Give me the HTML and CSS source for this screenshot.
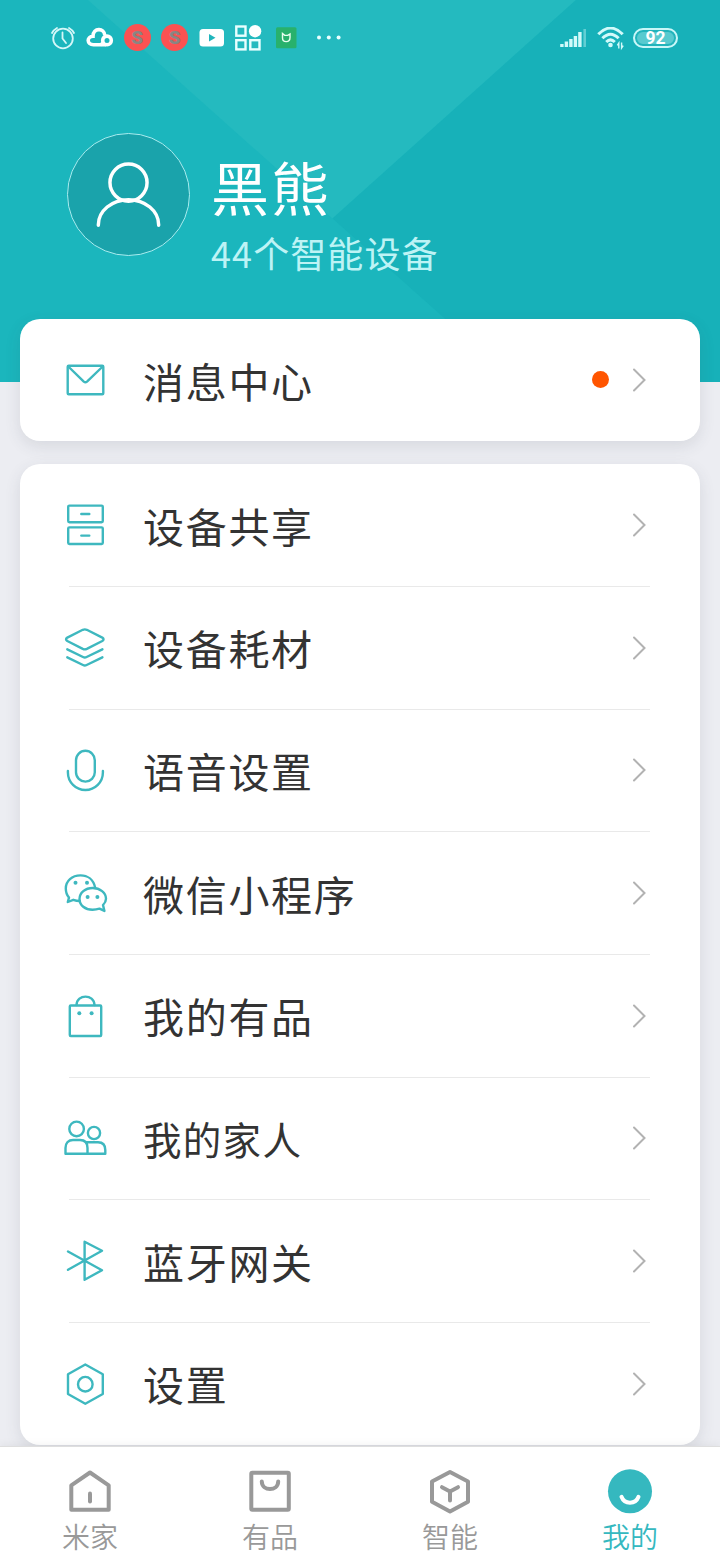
FILE: index.html
```html
<!DOCTYPE html>
<html lang="zh-CN">
<head>
<meta charset="utf-8">
<title>我的</title>
<link rel="stylesheet" href="styles.css">
</head>
<body>
<div class="app">
  <header class="header">
    <svg class="facets" viewBox="0 0 720 382" aria-hidden="true">
      <path d="M88 0H576L332.500 218.500Z" fill="#24babf"/>
      <path d="M576 0H720V382H516L332.500 218.500Z" fill="#17b1b9"/>
    </svg>
    <div class="status">
      <div class="status-left">
        <svg class="sicon" viewBox="0 0 36 36" fill="none" stroke="#d5f7f8" stroke-width="1.800" stroke-linecap="round"><circle cx="18" cy="18.500" r="9.800"/><path d="M17.500 12.500V18.500L21 23M7 13Q8.500 10 12 8M29 13Q27.500 10 24 8"/></svg>
        <svg class="sicon" viewBox="0 0 36 36" fill="none" stroke="#fff" stroke-width="3.600"><path d="M24 24.700H11.500C4.500 24.700 4.500 16.500 11 16.200C11 7.500 22.500 7.500 22.800 15.500"/><circle cx="25" cy="20.400" r="4.300"/><path d="M18.500 25L22 22"/></svg>
        <span class="sicon badge"><b>S</b></span>
        <span class="sicon badge"><b>S</b></span>
        <svg class="sicon" viewBox="0 0 36 36"><rect x="5.500" y="9" width="24.500" height="17.500" rx="3.500" fill="#fff"/><path d="M15 14V21.500L21.500 17.700Z" fill="#20b5bc"/></svg>
        <svg class="sicon" viewBox="0 0 36 36" fill="none" stroke="#e9ffff" stroke-width="2.400"><rect x="5.300" y="6.500" width="9.200" height="9.200"/><rect x="5.300" y="20.200" width="9.200" height="9.200"/><rect x="19.300" y="20.200" width="9.200" height="9.200"/><circle cx="24.100" cy="11.200" r="6.200" fill="#fff" stroke="none"/></svg>
        <svg class="sicon" viewBox="0 0 36 36"><rect x="7" y="7.300" width="20.500" height="21" rx="1.500" fill="#28b16c"/><path d="M13.500 13.500V18Q13.500 21.600 17.200 21.600Q21 21.600 21 17.500V14L18.800 15.400H15.700Z" fill="none" stroke="#e8fff0" stroke-width="1.400"/></svg>
        <svg class="more" viewBox="0 0 36 36" fill="#e9ffff"><circle cx="7" cy="17.500" r="2"/><circle cx="16.800" cy="17.500" r="2"/><circle cx="26.600" cy="17.500" r="2"/></svg>
      </div>
      <div class="status-right">
        <svg class="signal" viewBox="0 0 27 20" stroke="#d2fafa" stroke-width="3.400"><path d="M1.900 16V19M6.400 13.500V19M10.900 11V19M15.400 8V19M19.900 4V19"/><path d="M24.700 1V19" stroke-width="2.600" opacity=".4"/></svg>
        <svg class="wifi" viewBox="0 0 28 24" fill="none" stroke="#d2fafa" stroke-width="3"><path d="M1.300 7.300Q13.500-5.200 25.700 7.300M5.400 11.300Q13.500 3 21.600 11.300M9.200 15Q13.500 10.800 17.800 15"/><circle cx="13.500" cy="18" r="2.300" fill="#d2fafa" stroke="none"/><path d="M21.800 21.500V16L20.300 18.300M24.600 15.500V21L26.200 18.700" stroke-width="1.400"/></svg>
        <span class="battery">92</span>
      </div>
    </div>
    <div class="profile">
      <div class="avatar">
        <svg viewBox="0 0 122 122" fill="none" stroke="#fff" stroke-width="3.500" stroke-linecap="round"><circle cx="61" cy="49" r="18.700"/><path d="M30.600 92V91.500A30.400 25.300 0 0 1 91.400 91.500V92"/></svg>
      </div>
      <div class="who">
        <div class="name">黑熊</div>
        <div class="count">44个智能设备</div>
      </div>
    </div>
  </header>

  <main class="content">
    <section class="card">
      <div class="row">
        <svg class="icon" viewBox="0 0 50 50"><rect x="7.700" y="10.800" width="35.600" height="28.500" rx="1"/><path d="M8.300 11.500L23.800 26.600Q25.400 28 27 26.600L42.700 11.500"/></svg>
        <span class="label">消息中心</span><i class="dot"></i>
        <svg class="chev" viewBox="0 0 16 26"><path d="M3 2.500L13.500 13L3 23.500"/></svg>
      </div>
    </section>
    <section class="card list">
      <div class="row">
        <svg class="icon" viewBox="0 0 50 50"><rect x="8.200" y="5.600" width="34.600" height="16.600" rx="1.200"/><rect x="8.200" y="27.400" width="34.600" height="16.600" rx="1.200"/><path d="M21.300 14H29.300M21.300 35.600H29.300"/></svg>
        <span class="label">设备共享</span>
        <svg class="chev" viewBox="0 0 16 26"><path d="M3 2.500L13.500 13L3 23.500"/></svg>
      </div>
      <div class="row">
        <svg class="icon" viewBox="0 0 50 50"><path d="M22.800 6.800Q24.800 6 26.800 6.800L42.300 14.600Q44.800 16.300 42.300 18L26.800 25.900Q24.800 26.800 22.800 25.900L7.300 18Q4.800 16.300 7.300 14.600Z"/><path d="M7.300 26.300L23 34Q24.800 34.900 26.600 34L42.400 26.300M7.300 34.300L23 42Q24.800 42.900 26.600 42L42.400 34.300"/></svg>
        <span class="label">设备耗材</span>
        <svg class="chev" viewBox="0 0 16 26"><path d="M3 2.500L13.500 13L3 23.500"/></svg>
      </div>
      <div class="row">
        <svg class="icon" viewBox="0 0 50 50"><rect x="16" y="5.800" width="18.800" height="30.800" rx="9.400"/><path d="M7.900 26V27.500a17.500 17.500 0 0 0 35 0V26"/></svg>
        <span class="label">语音设置</span>
        <svg class="chev" viewBox="0 0 16 26"><path d="M3 2.500L13.500 13L3 23.500"/></svg>
      </div>
      <div class="row">
        <svg class="icon" viewBox="0 0 50 50"><path d="M35.200 19.800C33.500 11.500 27.500 7.400 20.500 7.400C12 7.400 5.800 13 5.800 20.500C5.800 24.700 7.100 27.500 9 29.600L7.800 34L13.300 31.800Q16.500 33 19.700 33"/><path d="M43 37C44.800 35.200 46 33 46 30.700C46 24.700 40 20 32.700 20C25.200 20 19.500 24.800 19.500 31C19.500 37.300 25.200 41.800 32.500 41.800Q36.200 41.800 39.500 40.700L44.400 42.900Z"/><g class="solid"><circle cx="15.500" cy="14.800" r="2"/><circle cx="27" cy="14.800" r="2"/><circle cx="27.600" cy="29" r="2"/><circle cx="37.400" cy="29" r="2"/></g></svg>
        <span class="label">微信小程序</span>
        <svg class="chev" viewBox="0 0 16 26"><path d="M3 2.500L13.500 13L3 23.500"/></svg>
      </div>
      <div class="row">
        <svg class="icon" viewBox="0 0 50 50"><rect x="9.800" y="14.500" width="31.400" height="30.500" rx="1"/><path d="M16.500 14C17 2.800 34 2.800 34.500 14"/><g class="solid"><circle cx="19.300" cy="22.200" r="2"/><circle cx="31.600" cy="22.200" r="2"/></g></svg>
        <span class="label">我的有品</span>
        <svg class="chev" viewBox="0 0 16 26"><path d="M3 2.500L13.500 13L3 23.500"/></svg>
      </div>
      <div class="row">
        <svg class="icon" viewBox="0 0 50 50"><circle cx="16.600" cy="15.900" r="7.300"/><circle cx="34" cy="20" r="6.100"/><path d="M27.500 40.800H5.500V35C5.500 30 8.500 27 13 27H20C25 27 27.500 30 27.500 35V40.800H45.300V37C45.300 31.500 42.500 29.200 38 29.200H26"/></svg>
        <span class="label small">我的家人</span>
        <svg class="chev" viewBox="0 0 16 26"><path d="M3 2.500L13.500 13L3 23.500"/></svg>
      </div>
      <div class="row">
        <svg class="icon" viewBox="0 0 50 50"><path d="M8 15.500L42 34.200L24.600 43.800V5.800L42 14.800L8 33.800"/></svg>
        <span class="label">蓝牙网关</span>
        <svg class="chev" viewBox="0 0 16 26"><path d="M3 2.500L13.500 13L3 23.500"/></svg>
      </div>
      <div class="row">
        <svg class="icon" viewBox="0 0 50 50"><path d="M25.300 5.500L42.800 15.200V35L25.300 44.700L8 35V15.200Z"/><circle cx="25.300" cy="25.200" r="7.300"/></svg>
        <span class="label">设置</span>
        <svg class="chev" viewBox="0 0 16 26"><path d="M3 2.500L13.500 13L3 23.500"/></svg>
      </div>
    </section>
  </main>

  <nav class="tabs">
    <div class="tab"><svg viewBox="0 0 48 48"><path d="M5.300 18.300L24 5.500L42.700 18.300V42.800H5.300Z"/><path d="M24 26.500V34.500"/></svg><span>米家</span></div>
    <div class="tab"><svg viewBox="0 0 48 48"><rect x="5.300" y="5.800" width="37.500" height="37" rx="1"/><path d="M15.800 14.500C16 24.500 32 24.500 32.200 14.500"/></svg><span>有品</span></div>
    <div class="tab"><svg viewBox="0 0 48 48"><path d="M24 4.900L42 14.500V34.800L24 44.600L6 34.800V14.500Z"/><path d="M16 20.200L24 24.400L32 20.200M24 24.400V33.500"/></svg><span>智能</span></div>
    <div class="tab active"><svg viewBox="0 0 48 48"><circle class="face" cx="24" cy="24.300" r="22"/><path class="smile" d="M15.500 29.800C18.500 37.700 29.500 37.700 32.500 29.800"/></svg><span>我的</span></div>
  </nav>
</div>
</body>
</html>
```
FILE: styles.css
```css
* { box-sizing: border-box; }
body {
  margin: 0;
  font-family: "Noto Sans CJK SC", sans-serif;
  background: #ecedf2;
}
svg { display: block; flex: none; }
.app {
  width: 720px;
  height: 1560px;
  overflow: hidden;
  display: flex;
  flex-direction: column;
}

/* Header */
.header {
  position: relative;
  height: 382px;
  flex: none;
  background: #1bb6bd;
}
.facets { position: absolute; inset: 0; width: 720px; height: 382px; }
.status {
  position: relative;
  height: 75px;
  padding: 0 42px 0 44.5px;
  display: flex;
  align-items: center;
  justify-content: space-between;
}
.status-left, .status-right { display: flex; align-items: center; }
.status-left { gap: 1.4px; }
.sicon { width: 36px; height: 36px; }
.more { width: 36px; height: 36px; margin-left: 6px; }
.badge { display: flex; align-items: center; justify-content: center; }
.badge b {
  width: 27px;
  height: 27px;
  border-radius: 50%;
  background: #fb5252;
  color: #8a8583;
  font: 900 19px/27px Roboto, sans-serif;
  text-align: center;
}
.signal { width: 27px; height: 20px; margin-right: 10px; }
.wifi { width: 28px; height: 24px; margin: 2px 8px 0 0; }
.battery {
  width: 45px;
  height: 20px;
  border: 2px solid #c9f7f8;
  border-radius: 10px;
  background: #58cacf;
  box-shadow: inset 0 0 0 2px #22b4bb;
  color: #fff;
  font: 700 17.5px/16.5px Roboto, sans-serif;
  text-align: center;
}
.profile {
  position: relative;
  display: flex;
  padding: 57.5px 0 0 67px;
}
.avatar {
  width: 123px;
  height: 123px;
  border-radius: 50%;
  border: 1.5px solid #a9ecef;
  background: #1aa3ab;
}
.avatar svg { width: 121px; height: 121px; }
.who { margin-left: 21px; padding-top: 17.5px; color: #fff; }
.name { font-size: 58px; line-height: 72px; letter-spacing: 2px; }
.count { margin-top: 2px; font-size: 36px; line-height: 56px; letter-spacing: 1.1px; color: #bdf3f5; }

/* Cards */
.content {
  position: relative;
  margin-top: -63px;
  padding: 0 20px;
  flex: 1;
  display: flex;
  flex-direction: column;
  gap: 22.5px;
}
.card {
  width: 679.5px;
  border-radius: 20px;
  background: #fff;
  box-shadow: 0 5px 16px rgba(60, 65, 80, .12);
}
.row {
  position: relative;
  height: 122.67px;
  display: flex;
  align-items: center;
  padding: 0 52.3px 0 40px;
}
.card:first-child .row { height: 122.3px; }
.list .row:not(:last-child)::after {
  content: "";
  position: absolute;
  left: 49px;
  right: 49.5px;
  bottom: -0.6px;
  height: 1px;
  background: #e9e9e9;
}
.icon {
  width: 50px;
  height: 50px;
  fill: none;
  stroke: #3eb8bf;
  stroke-width: 2.4;
  stroke-linejoin: round;
  stroke-linecap: round;
}
.icon .solid { fill: #3eb8bf; stroke: none; }
.label {
  margin: -1px 0 0 33px;
  flex: 1;
  font-size: 41px;
  line-height: 60px;
  letter-spacing: 1.7px;
  color: #333;
}
.label.small { font-size: 38.5px; letter-spacing: 1.3px; }
.dot {
  width: 17px;
  height: 17px;
  margin: -1px 22.5px 0 0;
  border-radius: 50%;
  background: #ff5500;
}
.chev {
  width: 16px;
  height: 26px;
  fill: none;
  stroke: #b2b2b2;
  stroke-width: 2;
  stroke-linecap: round;
}

/* Bottom navigation */
.tabs {
  position: relative;
  height: 114px;
  flex: none;
  display: flex;
  border-top: 1px solid #dedede;
  background: #fff;
  box-shadow: 0 -2px 8px rgba(0, 0, 0, .05);
}
.tab {
  flex: 1;
  display: flex;
  flex-direction: column;
  align-items: center;
  padding-top: 20px;
  font-family: "Noto Sans CJK SC DemiLight", "Noto Sans CJK SC", sans-serif;
  font-size: 28px;
  font-weight: 350;
  line-height: 40px;
  color: #999;
}
.tab svg {
  width: 48px;
  height: 48px;
  fill: none;
  stroke: #999;
  stroke-width: 4;
  stroke-linecap: round;
  stroke-linejoin: round;
}
.tab span { margin-top: 1px; }
.tab.active { color: #35b8bf; }
.tab .face { fill: #35b8bf; stroke: none; }
.tab .smile { stroke: #fff; }
```
